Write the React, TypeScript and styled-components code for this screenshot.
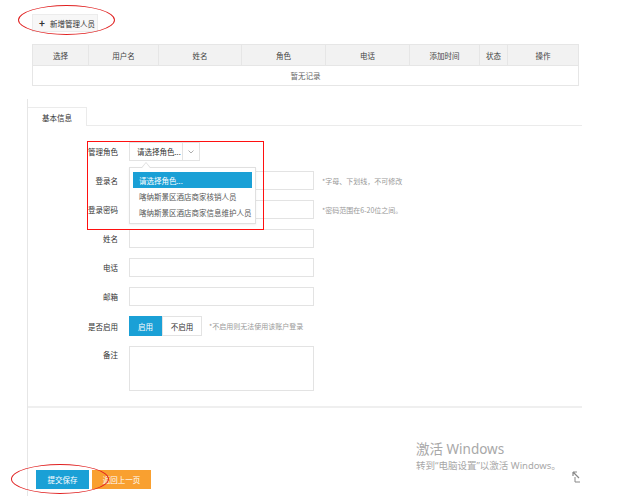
import React from "react";
import styled, { createGlobalStyle } from "styled-components";

const GlobalStyle = createGlobalStyle`
  html, body { margin: 0; padding: 0; background: #fff; }
  body {
    font-family: "Noto Sans CJK SC", "Noto Sans", sans-serif;
    font-size: 8px;
    color: #333;
  }
  * { box-sizing: border-box; }
`;

const Page = styled.div`
  position: relative;
  height: 496px;
  width: 628px;
  display: flex;
  flex-direction: column;
  overflow: hidden;
`;

const Toolbar = styled.div`
  position: relative;
  padding: 14px 0 0 32px;
  height: 32px;
`;

const AddButton = styled.button`
  display: flex;
  align-items: center;
  gap: 5px;
  height: 18px;
  width: 66px;
  padding: 0 0 0 6px;
  background: #f7f7f7;
  border: 1px solid #ececec;
  font-family: inherit;
  font-size: 7.5px;
  color: #333;
`;

const Plus = styled.span`
  font-size: 10px;
  font-weight: 700;
  line-height: 1;
  color: #333;
`;

const Ellipse = styled.div<{ $l: number; $t: number; $w: number; $h: number }>`
  position: absolute;
  left: ${(p) => p.$l}px;
  top: ${(p) => p.$t}px;
  width: ${(p) => p.$w}px;
  height: ${(p) => p.$h}px;
  border: 1px solid #e02020;
  border-radius: 50%;
  pointer-events: none;
`;

const Table = styled.table`
  margin: 12px 0 0 32px;
  width: 546px;
  border-collapse: collapse;
  table-layout: fixed;
  font-size: 7.5px;
`;

const Th = styled.th<{ $w: number }>`
  width: ${(p) => p.$w}px;
  height: 21px;
  padding: 0;
  background: #f2f2f2;
  border: 1px solid #e6e6e6;
  font-weight: 400;
  color: #444;
`;

const Td = styled.td`
  height: 20px;
  padding: 0;
  border: 1px solid #e6e6e6;
  text-align: center;
  color: #666;
`;

const Panel = styled.div`
  flex: 1;
  margin: 13px 0 0 27px;
  width: 555px;
  border-left: 1px solid #e6e6e6;
  display: flex;
  flex-direction: column;
`;

const TabBar = styled.div`
  height: 27px;
  padding-top: 8px;
  display: flex;
  border-bottom: 1px solid #ebebeb;
`;

const Tab = styled.div`
  width: 59px;
  height: 19px;
  margin-bottom: -1px;
  background: #fff;
  border-top: 1px solid #ebebeb;
  border-right: 1px solid #ebebeb;
  display: flex;
  align-items: center;
  justify-content: center;
  font-size: 7.5px;
  color: #333;
`;

const Form = styled.div`
  position: relative;
  padding: 16px 0 15px 0;
  border-bottom: 2px solid #efefef;
  display: flex;
  flex-direction: column;
  gap: 10px;
`;

const Row = styled.div<{ $tall?: boolean }>`
  display: flex;
  align-items: ${(p) => (p.$tall ? "flex-start" : "center")};
  gap: 11px;
`;

const Label = styled.div<{ $tall?: boolean }>`
  width: 90px;
  text-align: right;
  font-size: 7.5px;
  color: #333;
  padding-top: ${(p) => (p.$tall ? "3px" : "0")};
`;

const Input = styled.div`
  width: 185px;
  height: 19px;
  border: 1px solid #e3e3e3;
  background: #fff;
`;

const TextArea = styled.div`
  width: 185px;
  height: 45px;
  border: 1px solid #e3e3e3;
`;

const Hint = styled.span<{ $gap?: number }>`
  margin-left: ${(p) => p.$gap ?? 0}px;
  font-size: 7px;
  color: #999;
`;

const SelectWrap = styled.div`
  position: relative;
  display: flex;
  height: 19px;
  border: 1px solid #e3e3e3;
`;

const SelectText = styled.div`
  width: 52px;
  display: flex;
  align-items: center;
  padding-left: 7px;
  font-size: 7.5px;
  color: #333;
`;

const SelectCaret = styled.div`
  width: 17px;
  border-left: 1px solid #e3e3e3;
  display: flex;
  align-items: center;
  justify-content: center;
`;

const Dropdown = styled.div`
  position: absolute;
  left: -1px;
  top: 24px;
  width: 127px;
  padding: 4px 3px 3px 3px;
  background: #fff;
  border: 1px solid #e0e0e0;
  box-shadow: 0 1px 2px rgba(0, 0, 0, 0.06);
  z-index: 2;
`;

const DropArrow = styled.div`
  position: absolute;
  left: 11px;
  top: -6px;
  width: 0;
  height: 0;
  border-left: 5px solid transparent;
  border-right: 5px solid transparent;
  border-bottom: 6px solid #ddd;
  &::after {
    content: "";
    position: absolute;
    left: -4px;
    top: 1px;
    border-left: 4px solid transparent;
    border-right: 4px solid transparent;
    border-bottom: 5px solid #fff;
  }
`;

const Option = styled.div<{ $active?: boolean }>`
  height: 16px;
  display: flex;
  align-items: center;
  padding-left: 6px;
  font-size: 7.5px;
  color: ${(p) => (p.$active ? "#fff" : "#555")};
  background: ${(p) => (p.$active ? "#1aa0d6" : "transparent")};
`;

const Toggle = styled.div`
  display: flex;
  height: 20px;
`;

const ToggleBtn = styled.div<{ $on?: boolean }>`
  width: ${(p) => (p.$on ? 33 : 40)}px;
  display: flex;
  align-items: center;
  justify-content: center;
  font-size: 7.5px;
  background: ${(p) => (p.$on ? "#1aa0d6" : "#fff")};
  color: ${(p) => (p.$on ? "#fff" : "#333")};
  border: 1px solid ${(p) => (p.$on ? "#1aa0d6" : "#e3e3e3")};
`;

const ButtonBar = styled.div`
  margin-top: auto;
  padding: 0 0 7px 8px;
  display: flex;
  gap: 3px;
`;

const ActionBtn = styled.button<{ $color: string; $w: number }>`
  width: ${(p) => p.$w}px;
  height: 19px;
  border: none;
  padding: 0;
  background: ${(p) => p.$color};
  color: #fff;
  font-family: inherit;
  font-size: 7.5px;
`;

const RedBox = styled.div`
  position: absolute;
  left: 59px;
  top: 15px;
  width: 177px;
  height: 89px;
  background: transparent;
  box-shadow: inset 0 0 0 1px #ff1010;
  pointer-events: none;
  z-index: 3;
`;

const Watermark = styled.div`
  position: absolute;
  left: 416px;
  top: 439px;
  color: #a8a8a8;
  font-family: "Noto Sans", "Noto Sans CJK SC", sans-serif;
`;

const WmTitle = styled.div`
  font-size: 13.5px;
  line-height: 20px;
  white-space: nowrap;
`;

const WmSub = styled.div`
  font-size: 9.5px;
  line-height: 14px;
  white-space: nowrap;
`;

const CornerIcon = styled.svg`
  position: absolute;
  left: 572px;
  top: 471px;
`;

const columns: [string, number][] = [
  ["选择", 56],
  ["用户名", 70],
  ["姓名", 83],
  ["角色", 84],
  ["电话", 84],
  ["添加时间", 70],
  ["状态", 28],
  ["操作", 71],
];

export default function App() {
  return (
    <Page>
      <GlobalStyle />
      <Toolbar>
        <AddButton>
          <Plus>+</Plus>
          新增管理人员
        </AddButton>
        <Ellipse $l={18} $t={5} $w={97} $h={30} />
      </Toolbar>
      <Table>
        <thead>
          <tr>
            {columns.map(([c, w]) => (
              <Th key={c} $w={w}>
                {c}
              </Th>
            ))}
          </tr>
        </thead>
        <tbody>
          <tr>
            <Td colSpan={8}>暂无记录</Td>
          </tr>
        </tbody>
      </Table>
      <Panel>
        <TabBar>
          <Tab>基本信息</Tab>
        </TabBar>
        <Form>
          <RedBox />
          <Row>
            <Label>管理角色</Label>
            <SelectWrap>
              <SelectText>请选择角色...</SelectText>
              <SelectCaret>
                <svg width="6" height="4" viewBox="0 0 6 4">
                  <path d="M0.5 0.5 L3 3 L5.5 0.5" stroke="#999" strokeWidth="0.8" fill="none" />
                </svg>
              </SelectCaret>
              <Dropdown>
                <DropArrow />
                <Option $active>请选择角色...</Option>
                <Option>喀纳斯景区酒店商家核销人员</Option>
                <Option>喀纳斯景区酒店商家信息维护人员</Option>
              </Dropdown>
            </SelectWrap>
          </Row>
          <Row>
            <Label>登录名</Label>
            <Input />
            <Hint $gap={-3}>*字母、下划线，不可修改</Hint>
          </Row>
          <Row>
            <Label>登录密码</Label>
            <Input />
            <Hint $gap={-3}>*密码范围在6-20位之间。</Hint>
          </Row>
          <Row>
            <Label>姓名</Label>
            <Input />
          </Row>
          <Row>
            <Label>电话</Label>
            <Input />
          </Row>
          <Row>
            <Label>邮箱</Label>
            <Input />
          </Row>
          <Row>
            <Label>是否启用</Label>
            <Toggle>
              <ToggleBtn $on>启用</ToggleBtn>
              <ToggleBtn>不启用</ToggleBtn>
            </Toggle>
            <Hint $gap={-4}>*不启用则无法使用该账户登录</Hint>
          </Row>
          <Row $tall>
            <Label $tall>备注</Label>
            <TextArea />
          </Row>
        </Form>
        <ButtonBar>
          <ActionBtn $color="#1aa0d6" $w={53}>
            提交保存
          </ActionBtn>
          <ActionBtn $color="#f9a030" $w={59}>
            返回上一页
          </ActionBtn>
        </ButtonBar>
      </Panel>
      <Ellipse $l={11} $t={464} $w={98} $h={30} />
      <Watermark>
        <WmTitle>激活 Windows</WmTitle>
        <WmSub>转到“电脑设置”以激活 Windows。</WmSub>
      </Watermark>
      <CornerIcon width="9" height="12" viewBox="0 0 9 12">
        <path d="M1 1 L1 5 M1 1 L5 1 M1 1 L7 7" stroke="#888" strokeWidth="1.2" fill="none" />
        <path d="M3 6 L3 11 L8 11" stroke="#888" strokeWidth="1" fill="none" />
      </CornerIcon>
    </Page>
  );
}
